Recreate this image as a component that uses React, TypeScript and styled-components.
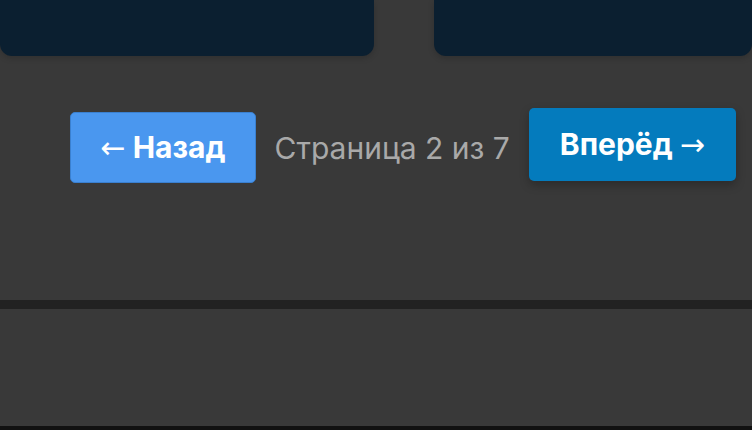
import React from "react";
import styled, { createGlobalStyle } from "styled-components";

const Global = createGlobalStyle`
  html, body { margin: 0; padding: 0; background: #393939; }
  body { font-family: Inter, "Noto Sans", "Liberation Sans", sans-serif; }
  #root { width: 752px; height: 430px; overflow: hidden; }
`;

const Page = styled.div`
  width: 752px;
  height: 430px;
  display: flex;
  flex-direction: column;
  background: #393939;
`;

const Cards = styled.div`
  display: grid;
  grid-template-columns: 374px 318px;
  column-gap: 60px;
  height: 56px;
  flex-shrink: 0;
`;

const Card = styled.div`
  background: #0b1f30;
  border-radius: 0 0 12px 12px;
  box-shadow: 0 2px 6px rgba(0, 0, 0, 0.18);
`;

const Pager = styled.nav`
  height: 244px;
  flex-shrink: 0;
  box-sizing: border-box;
  padding: 56px 16px 0 0;
  display: flex;
  justify-content: flex-end;
  align-items: flex-start;
  gap: 19px;
`;

const Button = styled.button<{ $primary?: boolean }>`
  font-family: Inter, "Noto Sans", "Liberation Sans", sans-serif;
  font-weight: 700;
  font-size: 30px;
  color: #ffffff;
  border-radius: 5px;
  cursor: pointer;
  white-space: nowrap;
  line-height: ${(p) => (p.$primary ? "34px" : "33px")};
  padding: ${(p) => (p.$primary ? "19px 31px" : "18px 29px")};
  background: ${(p) => (p.$primary ? "#047bbd" : "#4a97ef")};
  border: ${(p) => (p.$primary ? "none" : "1px solid #3a80d0")};
  margin-top: ${(p) => (p.$primary ? "-4px" : "0")};
  box-shadow: ${(p) =>
    p.$primary ? "0 4px 10px rgba(0, 0, 0, 0.25)" : "none"};
`;

const Arrow = styled.span`
  font-family: "DejaVu Sans", "Liberation Sans", sans-serif;
  font-weight: 400;
`;

const PageInfo = styled.span`
  font-size: 30px;
  line-height: 34px;
  color: #a9a9a9;
  padding-top: 19px;
  white-space: nowrap;
`;

const Divider = styled.div`
  height: 9px;
  background: #222222;
  flex-shrink: 0;
`;

const Footer = styled.div`
  height: 117px;
  background: #393939;
  flex-shrink: 0;
`;

const BottomEdge = styled.div`
  height: 4px;
  background: #111111;
  flex-shrink: 0;
`;

export default function App() {
  return (
    <>
      <Global />
      <Page>
        <Cards>
          <Card />
          <Card />
        </Cards>
        <Pager>
          <Button>
            <Arrow>←</Arrow> Назад
          </Button>
          <PageInfo>Страница 2 из 7</PageInfo>
          <Button $primary>
            Вперёд <Arrow>→</Arrow>
          </Button>
        </Pager>
        <Divider />
        <Footer />
        <BottomEdge />
      </Page>
    </>
  );
}
